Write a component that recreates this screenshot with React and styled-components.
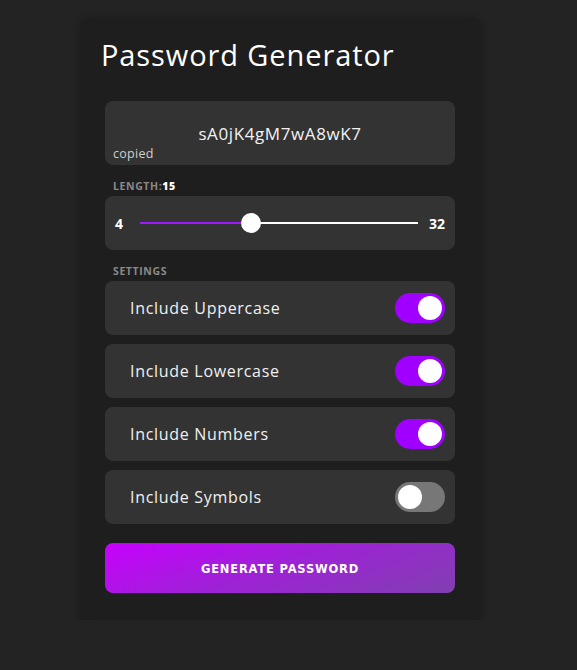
import React, { useState } from "react";
import styled, { createGlobalStyle } from "styled-components";

const GlobalStyle = createGlobalStyle`
  * { box-sizing: border-box; }
  body {
    margin: 0;
    background: #232323;
    font-family: "Open Sans", "Liberation Sans", sans-serif;
    color: #fff;
  }
`;

const settings = [
  { key: "upper", label: "Include Uppercase", on: true },
  { key: "lower", label: "Include Lowercase", on: true },
  { key: "numbers", label: "Include Numbers", on: true },
  { key: "symbols", label: "Include Symbols", on: false },
];

function App() {
  const [length] = useState(15);
  const ratio = (length - 4) / (32 - 4);
  const thumbPos = `calc(10px + ${ratio} * (100% - 20px))`;

  return (
    <>
      <GlobalStyle />
      <Page>
        <Card>
          <Title>Password Generator</Title>

          <ResultBox>
            <Result>sA0jK4gM7wA8wK7</Result>
            <Copied>copied</Copied>
          </ResultBox>

          <SectionLabel>
            LENGTH:<strong>{length}</strong>
          </SectionLabel>
          <Panel>
            <RangeNum>4</RangeNum>
            <Track>
              <Fill style={{ width: thumbPos }} />
              <Thumb style={{ left: thumbPos }} />
            </Track>
            <RangeNum>32</RangeNum>
          </Panel>

          <SectionLabel>SETTINGS</SectionLabel>
          <Settings>
            {settings.map((s) => (
              <SettingRow key={s.key}>
                <span>{s.label}</span>
                <Toggle $on={s.on}>
                  <Knob />
                </Toggle>
              </SettingRow>
            ))}
          </Settings>

          <GenerateButton>GENERATE PASSWORD</GenerateButton>
        </Card>
      </Page>
    </>
  );
}

const Page = styled.div`
  padding: 17px 0 0 80px;
`;

const Card = styled.div`
  width: 401px;
  background: #1e1e1e;
  border-radius: 10px;
  box-shadow: 0 3px 8px rgba(0, 0, 0, 0.3);
  padding: 20px 26px 27px 25px;
  display: flex;
  flex-direction: column;
`;

const Title = styled.h1`
  margin: 0 0 28px -4px;
  font-size: 29px;
  font-weight: 400;
  line-height: 36px;
  letter-spacing: 0.9px;
`;

const ResultBox = styled.div`
  position: relative;
  height: 64px;
  background: #333;
  border-radius: 8px;
  display: flex;
  align-items: center;
  justify-content: center;
`;

const Result = styled.span`
  font-size: 17px;
  color: #f2f2f2;
  letter-spacing: 0.6px;
`;

const Copied = styled.span`
  position: absolute;
  left: 8px;
  bottom: 3px;
  font-size: 12.5px;
  color: #cfcfcf;
  letter-spacing: 0.3px;
`;

const SectionLabel = styled.div`
  margin: 14px 0 3px 8px;
  font-size: 10.5px;
  font-weight: 700;
  color: #8a8a8a;
  line-height: 14px;
  letter-spacing: 0.6px;

  strong {
    color: #fff;
  }
`;

const Panel = styled.div`
  height: 54px;
  background: #333;
  border-radius: 8px;
  display: flex;
  align-items: center;
  padding: 0 10px;
  gap: 17px;
`;

const RangeNum = styled.span`
  font-size: 14px;
  font-weight: 700;
  color: #fff;
`;

const Track = styled.div`
  position: relative;
  flex: 1;
  height: 2px;
  background: #fff;
  margin-right: -6px;
`;

const Fill = styled.div`
  height: 100%;
  background: #9f19ff;
`;

const Thumb = styled.div`
  position: absolute;
  top: 50%;
  width: 20px;
  height: 20px;
  border-radius: 50%;
  background: #fff;
  transform: translate(-50%, -50%);
`;

const Settings = styled.div`
  display: flex;
  flex-direction: column;
  gap: 9px;
`;

const SettingRow = styled.div`
  height: 54px;
  background: #333;
  border-radius: 8px;
  display: flex;
  align-items: center;
  justify-content: space-between;
  padding: 0 10px 0 25px;
  font-size: 16px;
  letter-spacing: 0.7px;
  color: #f0f0f0;
`;

const Toggle = styled.div`
  width: 50px;
  height: 30px;
  border-radius: 15px;
  background: ${(p) => (p.$on ? "#9f00ff" : "#777")};
  display: flex;
  align-items: center;
  justify-content: ${(p) => (p.$on ? "flex-end" : "flex-start")};
  padding: 0 3px;
`;

const Knob = styled.div`
  width: 24px;
  height: 24px;
  border-radius: 50%;
  background: #fff;
`;

const GenerateButton = styled.button`
  margin-top: 19px;
  height: 50px;
  padding-top: 2px;
  border: none;
  border-radius: 8px;
  background: linear-gradient(160deg, #c800ff 0%, #a020d8 45%, #8040b0 100%);
  color: #fff;
  font-family: "DejaVu Sans", Verdana, sans-serif;
  font-weight: 700;
  font-size: 11.5px;
  letter-spacing: 0.8px;
  cursor: pointer;
`;

export default App;
